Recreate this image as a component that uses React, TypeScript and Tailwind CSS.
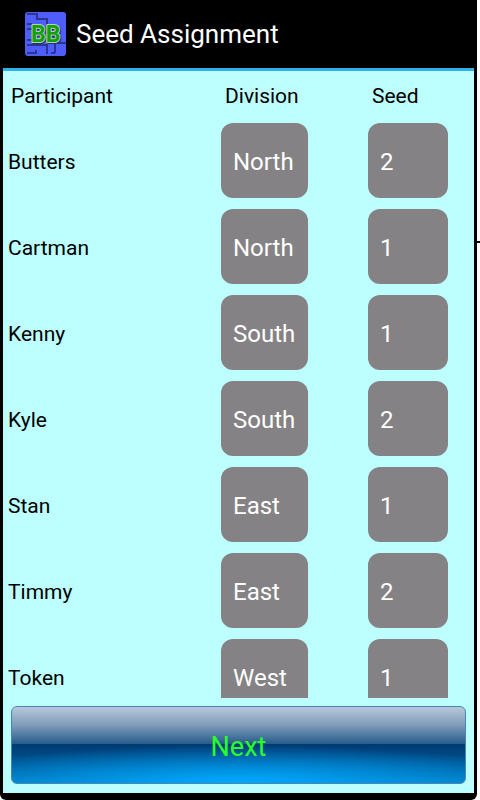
import React from "react";

const rows = [
  { name: "Butters", division: "North", seed: "2" },
  { name: "Cartman", division: "North", seed: "1" },
  { name: "Kenny", division: "South", seed: "1" },
  { name: "Kyle", division: "South", seed: "2" },
  { name: "Stan", division: "East", seed: "1" },
  { name: "Timmy", division: "East", seed: "2" },
  { name: "Token", division: "West", seed: "1" },
];

const fieldClass =
  "block h-[75px] appearance-none rounded-xl bg-[#848284] px-3 pt-[2px] text-2xl text-white";

function Logo() {
  return (
    <svg viewBox="0 0 41 44" className="h-11 w-[41px] shrink-0" aria-hidden="true">
      <rect width="41" height="44" rx="3" fill="#4f5efb" />
      <path
        d="M2 2h10v5h10v5M2 12h5M2 17h5M2 28h9v5h11v9M2 33h9M2 41h9M11 38v4M22 7v6M29 24v8M29 31h12M30 31v10M30 41h-4"
        fill="none"
        stroke="#2b3594"
        strokeWidth="2"
      />
      <g fontFamily="Roboto, sans-serif" fontWeight="700" fontSize="23" strokeLinejoin="round">
        <text x="7" y="31" fill="#26306f" stroke="#26306f" strokeWidth="2">BB</text>
        <text x="6" y="30" fill="#12a012" stroke="#b4d4a8" strokeWidth="2" paintOrder="stroke">BB</text>
      </g>
    </svg>
  );
}

export default function App() {
  return (
    <div className="flex h-screen bg-white font-[Roboto,'Liberation_Sans',sans-serif]">
      <div className="flex min-w-0 flex-1 flex-col rounded-b-md border-l-3 border-r-3 border-b-7 border-black bg-[#bdffff]">
        <header className="flex h-17 shrink-0 items-center gap-[10px] bg-black px-[22px]">
          <Logo />
          <h1 className="text-[26px] text-white">Seed Assignment</h1>
        </header>
        <main className="flex min-h-0 flex-1 flex-col border-t-3 border-[#31b2e7]">
          <div className="min-h-0 flex-1 overflow-hidden">
            <table className="w-full table-fixed border-collapse text-left text-[21px] text-black">
              <colgroup>
                <col />
                <col className="w-[147px]" />
                <col className="w-[106px]" />
              </colgroup>
              <thead>
                <tr className="h-[52px]">
                  <th className="pl-2 font-normal">Participant</th>
                  <th className="pl-1 font-normal">Division</th>
                  <th className="pl-1 font-normal">Seed</th>
                </tr>
              </thead>
              <tbody>
                {rows.map((row) => (
                  <tr key={row.name} className="h-[86px] align-top">
                    <td className="pl-[5px] pt-6">{row.name}</td>
                    <td>
                      <select aria-label={`${row.name} division`} defaultValue={row.division} className={`${fieldClass} w-[87px]`}>
                        <option>North</option>
                        <option>South</option>
                        <option>East</option>
                        <option>West</option>
                      </select>
                    </td>
                    <td>
                      <select aria-label={`${row.name} seed`} defaultValue={row.seed} className={`${fieldClass} w-20`}>
                        <option>1</option>
                        <option>2</option>
                      </select>
                    </td>
                  </tr>
                ))}
              </tbody>
            </table>
          </div>
          <div className="shrink-0 px-2 pt-2 pb-[9px]">
            <button
              type="button"
              className="block h-[78px] w-full rounded-md border border-[#4a86b5] bg-[radial-gradient(ellipse_70%_50%_at_50%_100%,#00a8ff_0%,#00a8ff00_100%),linear-gradient(#b8c8da_0%,#7f9cba_24%,#285d8c_48%,#003a73_49%,#00457f_60%,#007cc0_100%)] pt-1 text-[27px] text-[#29ff29]"
            >
              Next
            </button>
          </div>
        </main>
      </div>
      <div className="flex w-[3px] shrink-0 flex-col" aria-hidden="true">
        <div className="mt-[241px] h-[2px] bg-black" />
      </div>
    </div>
  );
}
